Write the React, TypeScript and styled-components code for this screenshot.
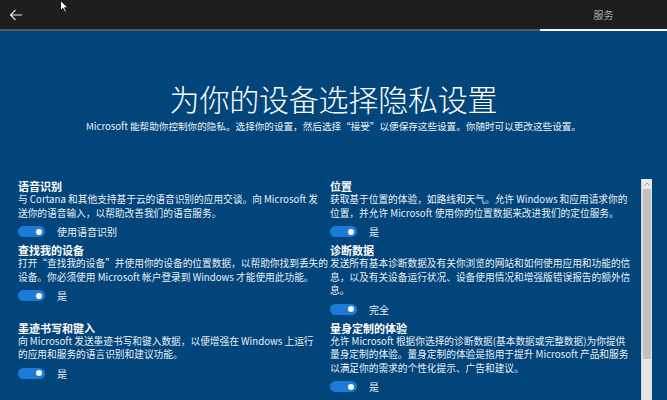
import * as React from "react";
import styled, { createGlobalStyle } from "styled-components";

const GlobalStyle = createGlobalStyle`
  html, body {
    margin: 0;
    padding: 0;
    background: #02457b;
  }
  body {
    font-family: "Noto Sans CJK SC", "Noto Sans", sans-serif;
    color: #ffffff;
  }
`;

const Page = styled.div`
  position: relative;
  width: 667px;
  height: 400px;
  overflow: hidden;
  background: #02457b;
  display: flex;
  flex-direction: column;
`;

const TopBar = styled.div`
  height: 29px;
  background: #1e1e1e;
  display: flex;
  align-items: center;
  justify-content: space-between;
  padding: 0 0 0 8px;
  border-bottom: 2px solid #4f5b66;
  position: relative;
  flex-shrink: 0;
`;

const BackButton = styled.button`
  background: none;
  border: none;
  padding: 0;
  width: 16px;
  height: 16px;
  display: flex;
  align-items: center;
  justify-content: center;
  cursor: pointer;
`;

const Tab = styled.div`
  width: 127px;
  align-self: stretch;
  display: flex;
  align-items: center;
  justify-content: center;
  font-size: 10px;
  color: #a8a8a8;
  position: relative;

  &::after {
    content: "";
    position: absolute;
    left: 0;
    right: 0;
    bottom: -2px;
    height: 2px;
    background: #f2f4f6;
  }
`;

const Cursor = styled.svg`
  position: absolute;
  left: 60px;
  top: 0;
`;

const Header = styled.div`
  display: flex;
  flex-direction: column;
  align-items: center;
  padding-top: 48px;
  flex-shrink: 0;
`;

const Title = styled.h1`
  margin: 0;
  font-family: "Noto Sans CJK SC Light", "Noto Sans CJK SC DemiLight",
    "Noto Sans CJK SC", sans-serif;
  font-size: 30px;
  font-weight: 300;
  line-height: 38px;
  letter-spacing: -0.2px;
  color: #ffffff;
`;

const Subtitle = styled.p`
  margin: 2px 0 0;
  font-size: 9.6px;
  line-height: 14px;
  color: #eef3f8;
`;

const Body = styled.div`
  display: flex;
  justify-content: space-between;
  margin-top: 46px;
  flex: 1;
  min-height: 0;
  padding-left: 18px;
  padding-right: 15px;
`;

const Grid = styled.div`
  display: grid;
  grid-template-columns: 300px 310px;
  column-gap: 12px;
  row-gap: 5px;
  align-content: start;
`;

const Section = styled.div`
  display: flex;
  flex-direction: column;
  min-width: 0;
`;

const Heading = styled.div`
  font-size: 11px;
  font-weight: 700;
  line-height: 14px;
  color: #ffffff;
`;

const Desc = styled.div`
  font-size: 9.7px;
  line-height: 13.5px;
  color: #eaf0f6;
  white-space: nowrap;
`;

const ToggleRow = styled.div`
  display: flex;
  align-items: center;
  gap: 12px;
  margin-top: 5px;
  height: 13px;
`;

const Track = styled.div<{ $on: boolean }>`
  width: 27px;
  height: 11px;
  border-radius: 6px;
  background: ${({ $on }) => ($on ? "#1b7bd6" : "transparent")};
  display: flex;
  align-items: center;
  justify-content: ${({ $on }) => ($on ? "flex-end" : "flex-start")};
  padding: 0 3px;
  box-sizing: border-box;
`;

const Knob = styled.div`
  width: 6px;
  height: 6px;
  border-radius: 50%;
  background: #ffffff;
`;

const ToggleLabel = styled.span`
  font-size: 10px;
  color: #eaf0f6;
`;

const ScrollBar = styled.div`
  flex: none;
  width: 11px;
  display: flex;
  flex-direction: column;
  background: #e6e6e6;
  border-left: 1px solid #d4d4d4;
  box-sizing: border-box;
`;

const ScrollArrow = styled.div`
  height: 10px;
  display: flex;
  align-items: center;
  justify-content: center;
  background: #e9e9e9;
`;

const ScrollThumb = styled.div`
  height: 170px;
  background: #c1c1c1;
  margin: 0 1px;
`;

const Toggle = ({ label }: { label: string }) => (
  <ToggleRow>
    <Track $on>
      <Knob />
    </Track>
    <ToggleLabel>{label}</ToggleLabel>
  </ToggleRow>
);

interface Setting {
  title: string;
  lines: string[];
  value: string;
}

const settings: Setting[] = [
  {
    title: "语音识别",
    lines: [
      "与 Cortana 和其他支持基于云的语音识别的应用交谈。向 Microsoft 发",
      "送你的语音输入，以帮助改善我们的语音服务。",
    ],
    value: "使用语音识别",
  },
  {
    title: "位置",
    lines: [
      "获取基于位置的体验，如路线和天气。允许 Windows 和应用请求你的",
      "位置，并允许 Microsoft 使用你的位置数据来改进我们的定位服务。",
    ],
    value: "是",
  },
  {
    title: "查找我的设备",
    lines: [
      "打开“查找我的设备”并使用你的设备的位置数据，以帮助你找到丢失的",
      "设备。你必须使用 Microsoft 帐户登录到 Windows 才能使用此功能。",
    ],
    value: "是",
  },
  {
    title: "诊断数据",
    lines: [
      "发送所有基本诊断数据及有关你浏览的网站和如何使用应用和功能的信",
      "息，以及有关设备运行状况、设备使用情况和增强版错误报告的额外信",
      "息。",
    ],
    value: "完全",
  },
  {
    title: "墨迹书写和键入",
    lines: [
      "向 Microsoft 发送墨迹书写和键入数据，以便增强在 Windows 上运行",
      "的应用和服务的语言识别和建议功能。",
    ],
    value: "是",
  },
  {
    title: "量身定制的体验",
    lines: [
      "允许 Microsoft 根据你选择的诊断数据(基本数据或完整数据)为你提供",
      "量身定制的体验。量身定制的体验是指用于提升 Microsoft 产品和服务",
      "以满足你的需求的个性化提示、广告和建议。",
    ],
    value: "是",
  },
];

export default function App() {
  return (
    <>
      <GlobalStyle />
      <Page>
        <TopBar>
          <BackButton aria-label="返回">
            <svg width="14" height="14" viewBox="0 0 14 14" fill="none">
              <path
                d="M13 7H1.5M6.5 2L1.5 7l5 5"
                stroke="#e8e8e8"
                strokeWidth="1.1"
              />
            </svg>
          </BackButton>
          <Tab>服务</Tab>
          <Cursor width="9" height="13" viewBox="0 0 9 13">
            <path
              d="M0.5 0.5V10.5L3 8.3L4.8 12.2L6.3 11.5L4.6 7.7H8Z"
              fill="#ffffff"
              stroke="#000000"
              strokeWidth="0.8"
            />
          </Cursor>
        </TopBar>

        <Header>
          <Title>为你的设备选择隐私设置</Title>
          <Subtitle>
            Microsoft 能帮助你控制你的隐私。选择你的设置，然后选择“接受”以便保存这些设置。你随时可以更改这些设置。
          </Subtitle>
        </Header>

        <Body>
          <Grid>
            {settings.map((s) => (
              <Section key={s.title}>
                <Heading>{s.title}</Heading>
                {s.lines.map((line) => (
                  <Desc key={line}>{line}</Desc>
                ))}
                <Toggle label={s.value} />
              </Section>
            ))}
          </Grid>
          <ScrollBar>
            <ScrollArrow>
              <svg width="6" height="4" viewBox="0 0 6 4">
                <path d="M0.5 3.5L3 1l2.5 2.5" stroke="#9a9a9a" fill="none" />
              </svg>
            </ScrollArrow>
            <ScrollThumb />
          </ScrollBar>
        </Body>
      </Page>
    </>
  );
}
